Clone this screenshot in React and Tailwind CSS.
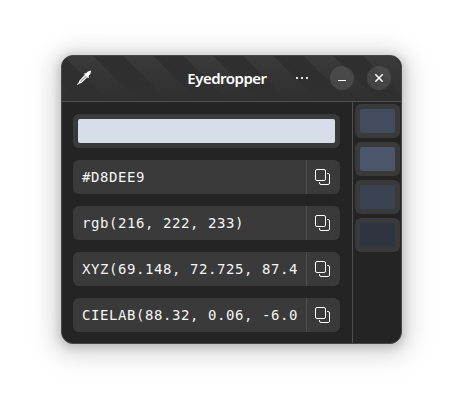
const formats = [
  '#D8DEE9',
  'rgb(216, 222, 233)',
  'XYZ(69.148, 72.725, 87.4',
  'CIELAB(88.32, 0.06, -6.0',
];

const history = ['bg-[#434c5e]', 'bg-[#4c566a]', 'bg-[#3b4252]', 'bg-[#2e3440]'];

function CopyIcon() {
  return (
    <svg width="16" height="16" viewBox="0 0 16 16" fill="none" stroke="#fff">
      <rect x="0.5" y="0.5" width="10" height="11" rx="1.5" />
      <path d="M12 4.5h1a1.5 1.5 0 0 1 1.5 1.5v8a1.5 1.5 0 0 1-1.5 1.5H6A1.5 1.5 0 0 1 4.5 14v-1" />
    </svg>
  );
}

function EyedropperIcon() {
  return (
    <svg width="16" height="16" viewBox="0 0 16 16" fill="#fff">
      <path d="M15.2.6 12 1.4 9.8 3.5l-.8-.6-.9.9.8.9-5.6 6-.9 2.4L.9 14.6l.6.5L3.2 13.8l2.3-.9 5.800-5.600.8.8 1-.9-.7-.9 1.900-2.300z" />
      <path d="m10.100 5.700.6.600-5.700 5.400-.7.200.3-.8z" fill="#303030" opacity=".65" />
    </svg>
  );
}

function Header() {
  return (
    <header className="flex h-[45px] shrink-0 items-center bg-[linear-gradient(to_bottom,transparent,#303030_95%),repeating-linear-gradient(45deg,#3a3a3a_0px,#3a3a3a_11.3px,#2f2f2f_11.8px,#2f2f2f_32.5px,#3a3a3a_33px,#3a3a3a_42.43px)] pr-[10px] pb-px pl-[14px]">
      <EyedropperIcon />
      <h1 className="ml-[93px] w-[84px] text-center font-['Noto_Sans','Open_Sans',sans-serif] text-[15px] leading-[20px] font-semibold whitespace-nowrap tracking-[-0.5px] text-white">
        Eyedropper
      </h1>
      <button className="ml-[27px] flex w-3 justify-between">
        <span className="size-0.5 bg-[#e4e4e4]" />
        <span className="size-0.5 bg-[#e4e4e4]" />
        <span className="size-0.5 bg-[#e4e4e4]" />
      </button>
      <button className="ml-auto flex size-6 items-center justify-center rounded-full bg-white/10">
        <span className="mt-[5px] h-px w-2 bg-white" />
      </button>
      <button className="ml-[13px] flex size-6 items-center justify-center rounded-full bg-white/10">
        <svg width="8" height="8" viewBox="0 0 8 8" stroke="#fff" strokeWidth="1.5">
          <path d="m.3.3 7.4 7.4M7.7.3.3 7.7" />
        </svg>
      </button>
    </header>
  );
}

export default function App() {
  return (
    <div className="h-[411px] w-[463px] overflow-hidden bg-white pt-[55px] pl-[61px]">
      <div className="flex h-[289px] w-[341px] flex-col overflow-hidden rounded-xl border border-[#484848] bg-[#242424] shadow-[0_2px_8px_2px_rgba(0,0,0,0.15),0_3px_20px_8px_rgba(0,0,0,0.11),0_6px_32px_14px_rgba(0,0,0,0.04)]">
        <Header />
        <div className="flex flex-1 border-t border-[#505050]">
          <main className="flex w-[290px] flex-col gap-3 pt-3 pb-[11px] pr-3 pl-[11px]">
            <button className="h-[34px] rounded-md bg-[#3a3a3a] p-[5px]">
              <span className="block h-full rounded-[2px] bg-[#d8dee9]" />
            </button>
            {formats.map((value) => (
              <div key={value} className="flex h-[34px] overflow-hidden rounded-md bg-[#3a3a3a]">
                <span className="w-[233px] overflow-hidden pl-[9px] font-['DejaVu_Sans_Mono',monospace] text-[14px] leading-[34px] tracking-[0.57px] whitespace-nowrap text-[#f5f5f5]">
                  {value}
                </span>
                <button className="flex flex-1 items-center border-l border-[#505050] pl-2">
                  <CopyIcon />
                </button>
              </div>
            ))}
          </main>
          <aside className="flex flex-1 flex-col gap-1 border-l border-[#505050] pt-0.5 pr-px pl-0.5">
            {history.map((color) => (
              <button key={color} className="h-[34px] rounded-md bg-[#3a3a3a] p-[5px]">
                <span className={`block h-full rounded-[2px] ${color}`} />
              </button>
            ))}
          </aside>
        </div>
      </div>
    </div>
  );
}
